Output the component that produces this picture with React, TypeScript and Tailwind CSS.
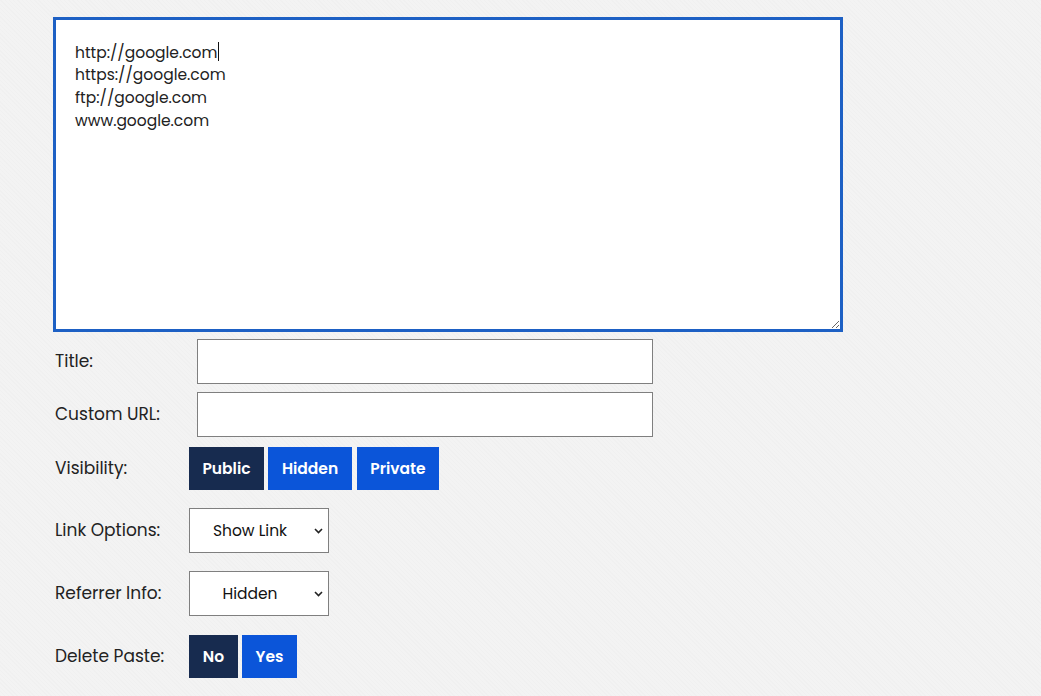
import React from "react";

const font = { fontFamily: "Poppins, 'Open Sans', 'Noto Sans', sans-serif" };

function Chevron() {
  return (
    <svg className="pointer-events-none absolute right-[6px] top-1/2 -translate-y-1/2" width="9" height="6" viewBox="0 0 9 6">
      <path d="M1 1 L4.5 4.5 L8 1" fill="none" stroke="#222" strokeWidth="1.6" />
    </svg>
  );
}

function Row({ label, children, className }: { label: string; children: React.ReactNode; className?: string }) {
  return (
    <div className={"flex items-center " + (className ?? "")}>
      <div className="w-[134px] shrink-0 text-[17px] text-[#222]">{label}</div>
      {children}
    </div>
  );
}

export default function App() {
  return (
    <div
      className="min-h-[696px] w-full bg-[#f3f3f3] pl-[53px] pt-[17px]"
      style={{
        ...font,
        backgroundImage:
          "repeating-linear-gradient(45deg, rgba(0,0,0,0.012) 0px, rgba(0,0,0,0.012) 1px, transparent 1px, transparent 3px)",
      }}
    >
      <div className="relative w-[790px]">
        <textarea
          className="block h-[315px] w-[790px] border-[3px] border-[#1d60c4] bg-white px-[19px] pt-[21.5px] text-[15.5px] leading-[22.8px] text-[#222] outline-none"
          defaultValue={"http://google.com\nhttps://google.com\nftp://google.com\nwww.google.com"}
        />
        <span className="pointer-events-none absolute left-[165px] top-[25px] h-[19px] w-[1px] bg-[#111]" />
      </div>
      <div className="pl-[2px]">
        <Row label="Title:" className="mt-[7px]">
          <input className="ml-[8px] h-[45px] w-[456px] border border-[#7f7f7f] bg-white outline-none" />
        </Row>
        <Row label="Custom URL:" className="mt-[8px]">
          <input className="ml-[8px] h-[45px] w-[456px] border border-[#7f7f7f] bg-white outline-none" />
        </Row>
        <Row label="Visibility:" className="mt-[10px]">
          <div className="flex gap-[4px] text-[15.5px] font-semibold text-white">
            <button className="h-[43px] w-[75px] bg-[#172b4f]">Public</button>
            <button className="h-[43px] w-[84px] bg-[#0b55d9]">Hidden</button>
            <button className="ml-[1px] h-[43px] w-[82px] bg-[#0b55d9]">Private</button>
          </div>
        </Row>
        <Row label="Link Options:" className="mt-[18px]">
          <div className="relative">
            <select
              className="block h-[45px] w-[140px] appearance-none border border-[#7f7f7f] bg-white pr-[18px] text-center text-[15.5px] text-[#111] outline-none"
              defaultValue="show"
            >
              <option value="show">Show Link</option>
              <option value="hide">Hide Link</option>
            </select>
            <Chevron />
          </div>
        </Row>
        <Row label="Referrer Info:" className="mt-[18px]">
          <div className="relative">
            <select
              className="block h-[45px] w-[140px] appearance-none border border-[#7f7f7f] bg-white pr-[18px] text-center text-[15.5px] text-[#111] outline-none"
              defaultValue="hidden"
            >
              <option value="hidden">Hidden</option>
              <option value="shown">Shown</option>
            </select>
            <Chevron />
          </div>
        </Row>
        <Row label="Delete Paste:" className="mt-[19px]">
          <div className="flex gap-[4px] text-[15.5px] font-semibold text-white">
            <button className="h-[43px] w-[49px] bg-[#172b4f]">No</button>
            <button className="h-[43px] w-[55px] bg-[#0b55d9]">Yes</button>
          </div>
        </Row>
      </div>
    </div>
  );
}
